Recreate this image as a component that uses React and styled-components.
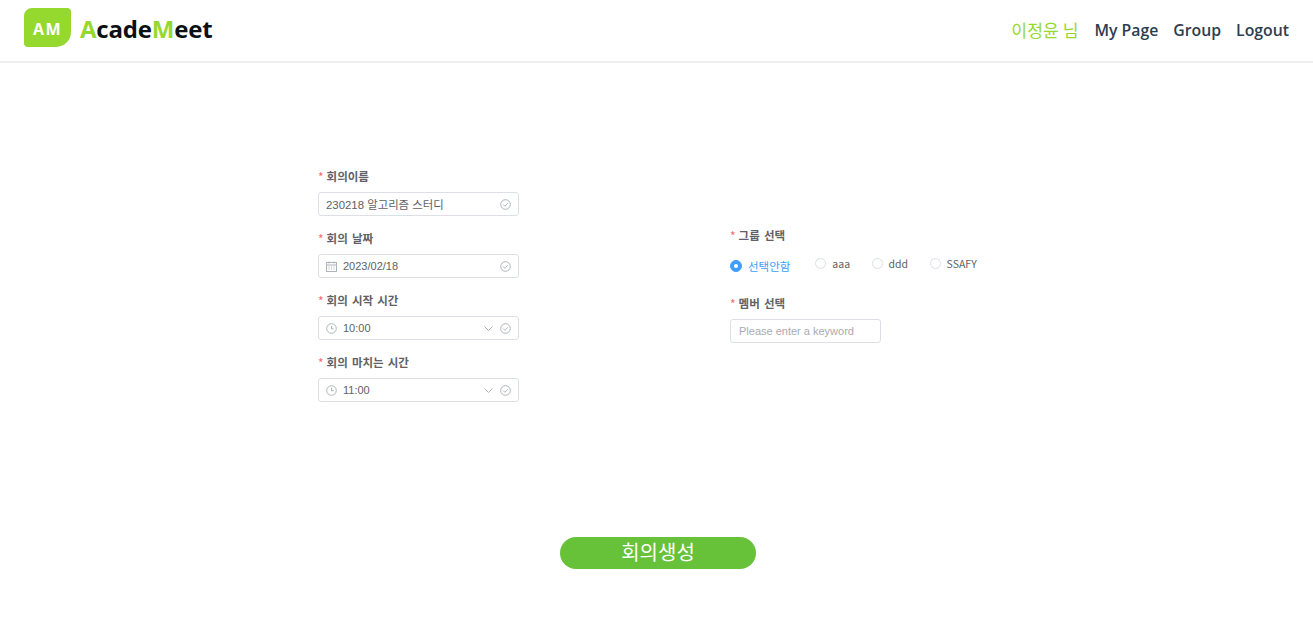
import React from 'react';
import styled, { createGlobalStyle } from 'styled-components';

const KR = '"Noto Sans CJK KR"';

const Global = createGlobalStyle`
  html, body {
    margin: 0;
    padding: 0;
    background: #fff;
    font-family: "Liberation Sans", ${KR}, sans-serif;
  }
`;

const Page = styled.div`
  width: 1313px;
  height: 640px;
  overflow: hidden;
`;

const Header = styled.header`
  display: flex;
  align-items: center;
  justify-content: space-between;
  box-sizing: content-box;
  height: 59px;
  padding: 0 24px 2px;
  border-bottom: 2px solid #eeeeee;
`;

const Brand = styled.div`
  display: flex;
  align-items: center;
  gap: 9px;
`;

const LogoMark = styled.div`
  display: flex;
  align-items: center;
  justify-content: center;
  box-sizing: border-box;
  width: 47px;
  height: 39px;
  margin-top: -4px;
  padding-top: 3px;
  border-radius: 8px 4px 15px 4px;
  background: #95d92f;
  color: #fff;
  font: 700 16px "Open Sans", sans-serif;
  letter-spacing: 1.5px;
`;

const Wordmark = styled.div`
  margin-top: -2px;
  font: 700 24px "Open Sans", sans-serif;
  letter-spacing: -0.2px;
  color: #0c1014;
  span {
    color: #95d92f;
  }
`;

const Nav = styled.nav`
  display: flex;
  align-items: center;
  gap: 15px;
`;

const NavUser = styled.span`
  margin-right: 1px;
  font: 400 17.2px ${KR}, sans-serif;
  color: #95d92f;
`;

const NavLink = styled.a`
  font: 600 15.8px "Open Sans", sans-serif;
  color: #2c3e50;
`;

const FormArea = styled.main`
  display: flex;
  align-items: center;
  height: 238px;
  margin-top: 102px;
  padding-left: 318px;
`;

const LeftColumn = styled.div`
  display: flex;
  flex-direction: column;
  gap: 12px;
  width: 412px;
`;

const RightColumn = styled.div`
  display: flex;
  flex-direction: column;
  gap: 18px;
`;

const Field = styled.div`
  display: flex;
  flex-direction: column;
  gap: 6px;
`;

const Label = styled.label`
  display: flex;
  align-items: center;
  gap: 3px;
  height: 20px;
  font: 700 11.5px ${KR}, sans-serif;
  word-spacing: 1.5px;
  color: #606266;
  &::before {
    content: '*';
    color: #f56c6c;
    font-weight: 400;
    font-size: 12px;
  }
`;

const InputBox = styled.div`
  display: flex;
  align-items: center;
  box-sizing: border-box;
  width: ${({ $width }) => $width || 201}px;
  height: 24px;
  padding: 0 7px 0 ${({ $pad }) => $pad || 7}px;
  border: 1px solid #dcdfe6;
  border-radius: 3px;
  font-size: 11px;
  color: #606266;
  background: #fff;
`;

const Value = styled.span`
  flex: 1;
  margin-left: ${({ $icon }) => ($icon ? 6 : 0)}px;
  font-size: ${({ $icon }) => ($icon ? 11 : 11.4)}px;
  white-space: nowrap;
`;

const Placeholder = styled.span`
  color: #a8abb2;
`;

const RadioRow = styled.div`
  display: flex;
  align-items: flex-start;
  height: 24px;
`;

const RadioItem = styled.div`
  display: flex;
  align-items: center;
  gap: 6px;
  margin-right: ${({ $checked }) => ($checked ? 25 : 21.5)}px;
  margin-top: ${({ $checked }) => ($checked ? 5 : 2)}px;
  height: 20px;
  font-size: ${({ $checked }) => ($checked ? 11.5 : 10.5)}px;
  font-family: ${KR}, sans-serif;
  color: ${({ $checked }) => ($checked ? '#409eff' : '#606266')};
`;

const RadioDot = styled.span`
  display: flex;
  align-items: center;
  justify-content: center;
  box-sizing: border-box;
  width: ${({ $checked }) => ($checked ? 12 : 11)}px;
  height: ${({ $checked }) => ($checked ? 12 : 11)}px;
  border-radius: 50%;
  border: 1px solid ${({ $checked }) => ($checked ? '#409eff' : '#dcdfe6')};
  background: ${({ $checked }) => ($checked ? '#409eff' : '#fff')};
  &::after {
    content: '';
    display: ${({ $checked }) => ($checked ? 'block' : 'none')};
    width: 4px;
    height: 4px;
    border-radius: 50%;
    background: #fff;
  }
`;

const Footer = styled.div`
  display: flex;
  justify-content: center;
  margin-top: 134px;
  padding-left: 3px;
`;

const SubmitButton = styled.button`
  width: 196px;
  height: 32px;
  padding: 0 0 3px;
  border: 0;
  border-radius: 16px;
  background: #67c23a;
  color: #fff;
  font: 400 20px ${KR}, sans-serif;
`;

const IconSvg = styled.svg`
  flex: none;
  width: 11px;
  height: 11px;
  margin-left: ${({ $gap }) => $gap || 0}px;
  fill: none;
  stroke: #b0b3b9;
  stroke-width: 1;
`;

const CheckIcon = () => (
  <IconSvg viewBox="0 0 11 11" $gap={6}>
    <circle cx="5.5" cy="5.5" r="4.8" />
    <path d="M3.2 5.6l1.7 1.7 3-3.1" />
  </IconSvg>
);

const ClockIcon = () => (
  <IconSvg viewBox="0 0 11 11">
    <circle cx="5.5" cy="5.5" r="4.8" />
    <path d="M5.5 2.8v3h2.2" />
  </IconSvg>
);

const CalendarIcon = () => (
  <IconSvg viewBox="0 0 11 11">
    <rect x="0.5" y="1.5" width="10" height="9" />
    <path d="M0.5 4h10M3 0.5v2M8 0.5v2M2.5 6h1M5 6h1M7.5 6h1M2.5 8h1M5 8h1M7.5 8h1" />
  </IconSvg>
);

const ChevronIcon = () => (
  <IconSvg viewBox="0 0 11 11">
    <path d="M1.5 3.5l4 4 4-4" />
  </IconSvg>
);

const fields = [
  { label: '회의이름', value: '230218 알고리즘 스터디' },
  { label: '회의 날짜', value: '2023/02/18', icon: <CalendarIcon /> },
  { label: '회의 시작 시간', value: '10:00', icon: <ClockIcon />, select: true },
  { label: '회의 마치는 시간', value: '11:00', icon: <ClockIcon />, select: true },
];

const groups = ['선택안함', 'aaa', 'ddd', 'SSAFY'];

export default function App() {
  return (
    <Page>
      <Global />
      <Header>
        <Brand>
          <LogoMark>AM</LogoMark>
          <Wordmark>
            <span>A</span>cade<span>M</span>eet
          </Wordmark>
        </Brand>
        <Nav>
          <NavUser>이정윤 님</NavUser>
          <NavLink>My Page</NavLink>
          <NavLink>Group</NavLink>
          <NavLink>Logout</NavLink>
        </Nav>
      </Header>
      <FormArea>
        <LeftColumn>
          {fields.map((f) => (
            <Field key={f.label}>
              <Label>{f.label}</Label>
              <InputBox>
                {f.icon}
                <Value $icon={!!f.icon}>{f.value}</Value>
                {f.select && <ChevronIcon />}
                <CheckIcon />
              </InputBox>
            </Field>
          ))}
        </LeftColumn>
        <RightColumn>
          <Field>
            <Label>그룹 선택</Label>
            <RadioRow>
              {groups.map((g, i) => (
                <RadioItem key={g} $checked={i === 0}>
                  <RadioDot $checked={i === 0} />
                  {g}
                </RadioItem>
              ))}
            </RadioRow>
          </Field>
          <Field>
            <Label>멤버 선택</Label>
            <InputBox $width={151} $pad={8}>
              <Placeholder>Please enter a keyword</Placeholder>
            </InputBox>
          </Field>
        </RightColumn>
      </FormArea>
      <Footer>
        <SubmitButton>회의생성</SubmitButton>
      </Footer>
    </Page>
  );
}
